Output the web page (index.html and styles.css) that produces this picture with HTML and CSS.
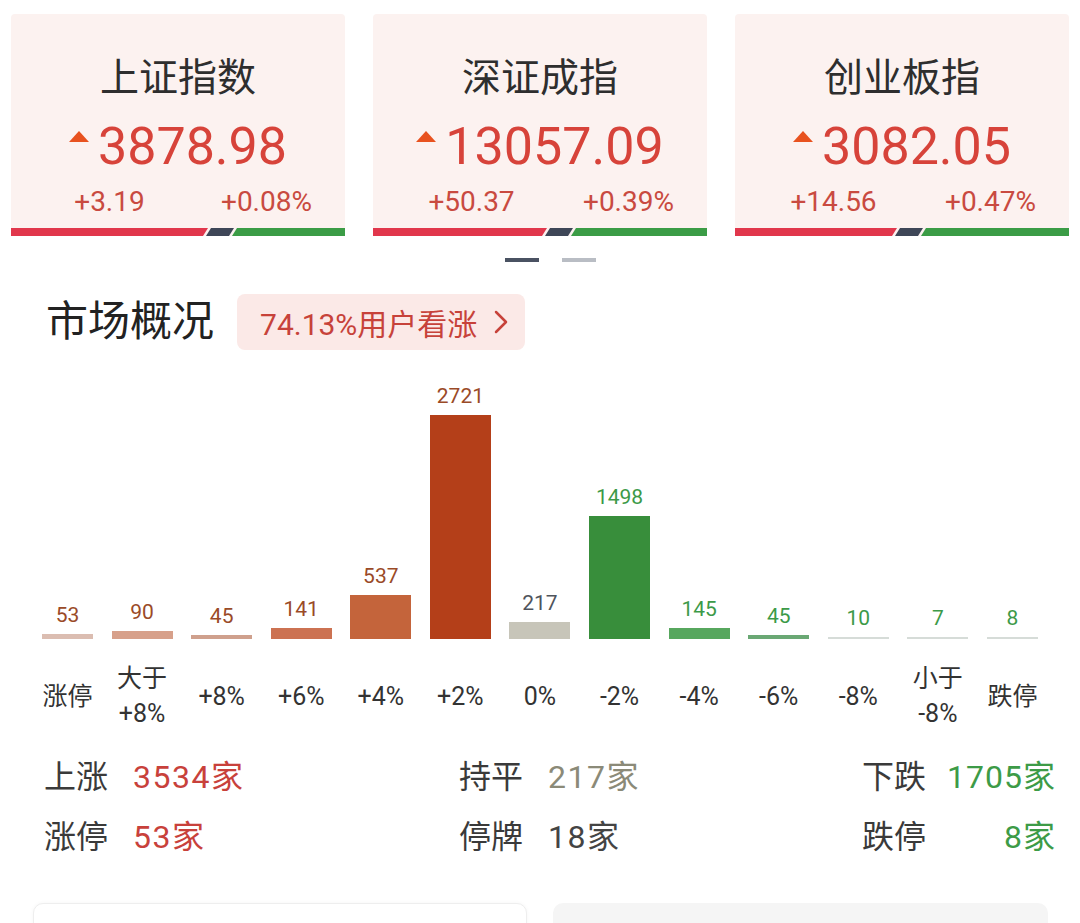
FILE: index.html
```html
<!DOCTYPE html>
<html lang="zh-CN">
<head>
<meta charset="utf-8">
<title>市场概况</title>
<link rel="stylesheet" href="styles.css">
</head>
<body>
<div class="page">
  <div class="cards">
    <div class="card">
      <div class="card-title">上证指数</div>
      <div class="card-value"><svg class="tri" width="20" height="11" viewBox="0 0 20 11"><polygon points="10,0 20,11 0,11"/></svg><span>3878.98</span></div>
      <div class="card-sub"><span>+3.19</span><span>+0.08%</span></div>
      <div class="ratio"><div class="seg up" style="width:197px"></div><div class="seg flat"></div><div class="seg down"></div></div>
    </div>
    <div class="card">
      <div class="card-title">深证成指</div>
      <div class="card-value"><svg class="tri" width="20" height="11" viewBox="0 0 20 11"><polygon points="10,0 20,11 0,11"/></svg><span>13057.09</span></div>
      <div class="card-sub"><span>+50.37</span><span>+0.39%</span></div>
      <div class="ratio"><div class="seg up" style="width:174px"></div><div class="seg flat"></div><div class="seg down"></div></div>
    </div>
    <div class="card">
      <div class="card-title">创业板指</div>
      <div class="card-value"><svg class="tri" width="20" height="11" viewBox="0 0 20 11"><polygon points="10,0 20,11 0,11"/></svg><span>3082.05</span></div>
      <div class="card-sub"><span>+14.56</span><span>+0.47%</span></div>
      <div class="ratio"><div class="seg up" style="width:162px"></div><div class="seg flat"></div><div class="seg down"></div></div>
    </div>
  </div>

  <div class="dots"><span class="dot active"></span><span class="dot"></span></div>

  <div class="section-head">
    <h2 class="section-title">市场概况</h2>
    <div class="badge"><span>74.13%用户看涨</span><svg class="chev" width="14" height="24" viewBox="0 0 14 24"><polyline points="2,2 12,12 2,22"/></svg></div>
  </div>

  <div class="chart">
    <div class="col r"><div class="val">53</div><div class="bar b1" style="height:5px"></div></div>
    <div class="col r"><div class="val">90</div><div class="bar b2" style="height:8px"></div></div>
    <div class="col r"><div class="val">45</div><div class="bar b3" style="height:4px"></div></div>
    <div class="col r"><div class="val">141</div><div class="bar b4" style="height:11px"></div></div>
    <div class="col r"><div class="val">537</div><div class="bar b5" style="height:44px"></div></div>
    <div class="col r"><div class="val">2721</div><div class="bar b6" style="height:224px"></div></div>
    <div class="col n"><div class="val">217</div><div class="bar b7" style="height:17px"></div></div>
    <div class="col g"><div class="val">1498</div><div class="bar b8" style="height:123px"></div></div>
    <div class="col g"><div class="val">145</div><div class="bar b9" style="height:11px"></div></div>
    <div class="col g"><div class="val">45</div><div class="bar b10" style="height:4px"></div></div>
    <div class="col g"><div class="val">10</div><div class="bar b11" style="height:2px"></div></div>
    <div class="col g"><div class="val">7</div><div class="bar b11" style="height:2px"></div></div>
    <div class="col g"><div class="val">8</div><div class="bar b11" style="height:2px"></div></div>
  </div>
  <div class="axis">
    <div class="tick">涨停</div>
    <div class="tick">大于<br>+8%</div>
    <div class="tick">+8%</div>
    <div class="tick">+6%</div>
    <div class="tick">+4%</div>
    <div class="tick">+2%</div>
    <div class="tick">0%</div>
    <div class="tick">-2%</div>
    <div class="tick">-4%</div>
    <div class="tick">-6%</div>
    <div class="tick">-8%</div>
    <div class="tick">小于<br>-8%</div>
    <div class="tick">跌停</div>
  </div>

  <div class="stats">
    <div class="stat"><span class="lbl">上涨</span><span class="num red">3534家</span></div>
    <div class="stat"><span class="lbl">持平</span><span class="num gray">217家</span></div>
    <div class="stat end"><span class="lbl">下跌</span><span class="num green">1705家</span></div>
    <div class="stat"><span class="lbl">涨停</span><span class="num red">53家</span></div>
    <div class="stat"><span class="lbl">停牌</span><span class="num dark">18家</span></div>
    <div class="stat end"><span class="lbl">跌停</span><span class="num green">8家</span></div>
  </div>

  <div class="bottom">
    <div class="panel white"></div>
    <div class="panel grey"></div>
  </div>
</div>
</body>
</html>
```

FILE: styles.css
```css
html, body {
  margin: 0;
  padding: 0;
  background: #ffffff;
}
body {
  font-family: "Roboto", "Noto Sans CJK SC", sans-serif;
  color: #2b2b2b;
  overflow: hidden;
}
.page {
  width: 1080px;
}
.cards {
  display: flex;
  gap: 28px;
  padding: 14px 10px 0 11px;
}
.card {
  width: 334px;
  height: 222px;
  background: #fcf2f0;
  border-radius: 4px 4px 0 0;
  display: flex;
  flex-direction: column;
  padding-top: 42px;
  box-sizing: border-box;
}
.card-title {
  font-size: 39px;
  line-height: 44px;
  text-align: center;
  color: #2e2e2e;
}
.card-value {
  margin-top: 19px;
  display: flex;
  justify-content: center;
  align-items: flex-start;
  gap: 9px;
  font-size: 52px;
  line-height: 56px;
  color: #d7433a;
}
.tri {
  margin-top: 12px;
  fill: #e8521f;
}
.card-sub {
  margin-top: 11px;
  display: flex;
  padding-left: 20px;
  font-size: 28px;
  line-height: 32px;
  color: #c94a40;
}
.card-sub span {
  flex: 1;
  text-align: center;
}
.ratio {
  margin-top: auto;
  display: flex;
  height: 8px;
}
.seg {
  height: 8px;
}
.seg.up {
  background: #e1374c;
  clip-path: polygon(0 0, 100% 0, calc(100% - 5px) 100%, 0 100%);
}
.seg.flat {
  width: 28px;
  margin-left: -2px;
  background: #3e4657;
  clip-path: polygon(5px 0, 100% 0, calc(100% - 5px) 100%, 0 100%);
}
.seg.down {
  flex: 1;
  margin-left: -2px;
  background: #3b9c46;
  clip-path: polygon(5px 0, 100% 0, 100% 100%, 0 100%);
}
.dots {
  display: flex;
  justify-content: center;
  gap: 23px;
  margin-top: 22px;
  padding-left: 20px;
}
.dot {
  width: 34px;
  height: 4px;
  background: #b9bdc4;
}
.dot.active {
  background: #4a5262;
}
.section-head {
  display: flex;
  align-items: center;
  gap: 23px;
  margin-top: 32px;
  padding-left: 46px;
}
.section-title {
  margin: 0;
  font-weight: normal;
  font-size: 42px;
  line-height: 56px;
  color: #222;
}
.badge {
  display: flex;
  align-items: center;
  gap: 17px;
  height: 56px;
  padding: 0 17px 0 23px;
  background: #fbe9e7;
  border-radius: 8px;
  font-size: 30px;
  color: #c7423a;
}
.chev {
  fill: none;
  stroke: #c7423a;
  stroke-width: 2.5;
  stroke-linecap: round;
  stroke-linejoin: round;
}
.chart,
.axis {
  display: grid;
  grid-template-columns: 51px repeat(11, 61px) 51px;
  column-gap: 18.58px;
  margin-left: 42px;
  width: 996px;
}
.chart {
  height: 273px;
  margin-top: 16px;
  align-items: end;
}
.col {
  display: flex;
  flex-direction: column;
  align-items: stretch;
}
.val {
  font-size: 21px;
  line-height: 24px;
  text-align: center;
  margin-bottom: 7px;
}
.col.r .val { color: #9a4a27; }
.col.n .val { color: #4f545c; }
.col.g .val { color: #3c9a48; }
.bar { width: 100%; }
.b1 { background: #dbbdb1; }
.b2 { background: #d7a08a; }
.b3 { background: #cfa08d; }
.b4 { background: #cc7252; }
.b5 { background: #c4643b; }
.b6 { background: #b43f19; }
.b7 { background: #c7c5b9; }
.b8 { background: #388e3b; }
.b9 { background: #57a75e; }
.b10 { background: #6aa874; }
.b11 { background: #d6dcd8; }
.axis {
  height: 70px;
  margin-top: 22px;
  align-items: center;
}
.tick {
  font-size: 25px;
  line-height: 35px;
  text-align: center;
  white-space: nowrap;
  color: #333;
  justify-self: center;
}
.stats {
  display: grid;
  grid-template-columns: 415px 403px 193px;
  padding-left: 44px;
  margin-top: 16px;
}
.stat {
  display: flex;
  gap: 25px;
  font-size: 32px;
  line-height: 60px;
  color: #3a3a3a;
  white-space: nowrap;
}
.stat.end {
  justify-content: space-between;
  gap: 8px;
}
.num {
  letter-spacing: 1.5px;
}
.stat.end .num {
  letter-spacing: 1px;
  margin-right: -1px;
}
.num.red { color: #c8413b; }
.num.gray { color: #8b8a78; }
.num.green { color: #3d9b47; }
.num.dark { color: #444; }
.bottom {
  display: flex;
  gap: 26px;
  margin-top: 36px;
  padding-left: 33px;
}
.panel {
  width: 494px;
  height: 60px;
  border-radius: 10px;
  box-sizing: border-box;
}
.panel.white {
  background: #fff;
  border: 1px solid #eeeeee;
  box-shadow: 0 0 4px rgba(0,0,0,0.04);
}
.panel.grey {
  width: 495px;
  background: #f5f5f5;
}
```
